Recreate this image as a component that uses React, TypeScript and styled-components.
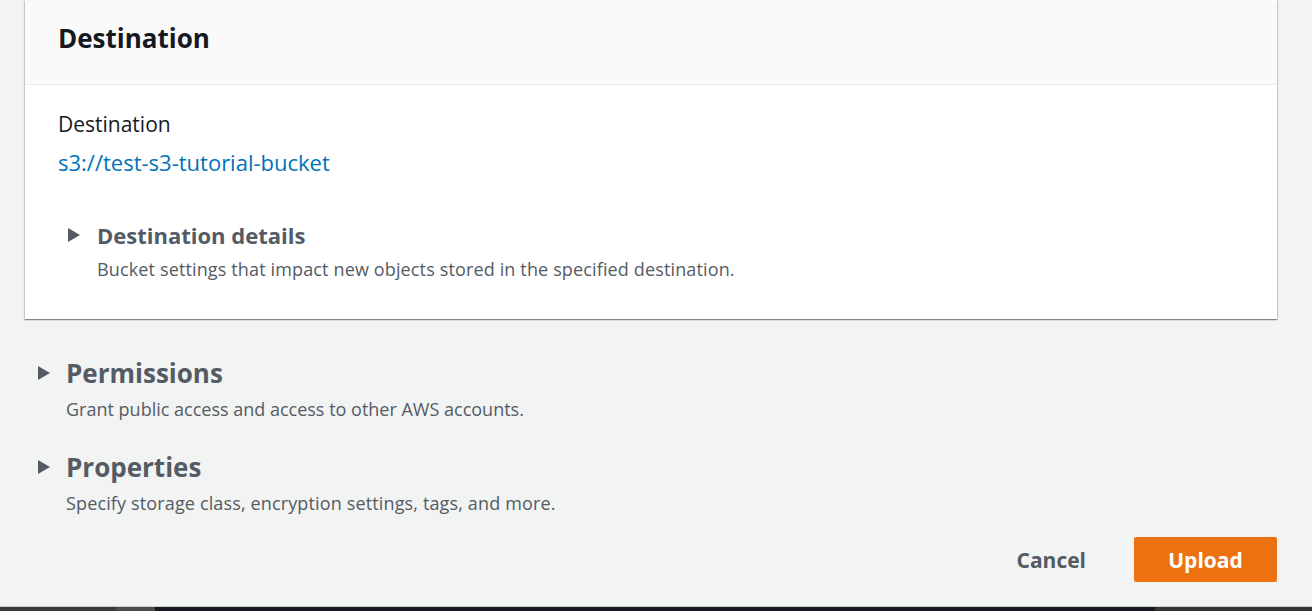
import React from 'react'
import styled, { createGlobalStyle } from 'styled-components'

const GlobalStyle = createGlobalStyle`
  html, body {
    margin: 0;
    padding: 0;
    background: #f2f3f3;
  }
  body {
    font-family: 'Open Sans', 'Noto Sans', sans-serif;
    color: #16191f;
  }
`

const Page = styled.div`
  width: 1312px;
  height: 611px;
  display: flex;
  flex-direction: column;
  overflow: hidden;
`

const Content = styled.div`
  flex: 1;
  display: flex;
  flex-direction: column;
  padding: 0 35px 0 25px;
`

const Card = styled.section`
  background: #fff;
  box-shadow: 0 1px 1px 0 rgba(0, 28, 36, 0.3), 1px 1px 1px 0 rgba(0, 28, 36, 0.15),
    -1px 1px 1px 0 rgba(0, 28, 36, 0.15);
`

const CardHeader = styled.header`
  height: 85px;
  display: flex;
  align-items: center;
  padding: 0 33px 8px;
  background: #fafafa;
  border-bottom: 1px solid #eaeded;
  box-sizing: border-box;
`

const CardTitle = styled.h2`
  margin: 0;
  font-size: 26px;
  font-weight: 700;
  color: #16191f;
`

const CardBody = styled.div`
  padding: 25px 33px 38px;
`

const Label = styled.div`
  font-size: 21px;
  line-height: 28px;
  color: #16191f;
`

const Link = styled.a`
  display: block;
  margin-top: 10px;
  font-size: 22px;
  line-height: 28px;
  color: #0073bb;
  text-decoration: none;
`

const Expander = styled.div<{ $indent: number }>`
  display: grid;
  grid-template-columns: ${p => p.$indent}px 1fr;
  row-gap: 8px;
  align-items: center;
`

const Caret = styled.span`
  width: 0;
  height: 0;
  border-top: 7px solid transparent;
  border-bottom: 7px solid transparent;
  border-left: 12px solid #545b64;
`

const ExpanderTitle = styled.div<{ $size: number }>`
  font-size: ${p => p.$size}px;
  font-weight: 700;
  color: #545b64;
  line-height: ${p => (p.$size > 24 ? 32 : 28)}px;
`

const ExpanderDesc = styled.div<{ $spacing?: number }>`
  grid-column: 2;
  font-size: 18px;
  line-height: 24px;
  letter-spacing: ${p => p.$spacing ?? 0}px;
  color: #545b64;
`

const DetailsBlock = styled.div`
  margin-top: 45px;
  padding-left: 10px;
`

const Sections = styled.div`
  display: flex;
  flex-direction: column;
  gap: 30px;
  padding: 38px 0 0 13px;
`

const Actions = styled.div`
  display: flex;
  justify-content: flex-end;
  align-items: center;
  gap: 48px;
  margin-top: 22px;
`

const TextButton = styled.button`
  border: 0;
  background: none;
  padding: 0;
  font-family: inherit;
  font-size: 21px;
  font-weight: 700;
  color: #545b64;
  cursor: pointer;
`

const PrimaryButton = styled.button`
  width: 143px;
  height: 45px;
  border: 0;
  border-radius: 2px;
  background: #ec7211;
  font-family: inherit;
  font-size: 21px;
  font-weight: 700;
  color: #fff;
  cursor: pointer;
`

const Taskbar = styled.div`
  height: 4px;
  display: flex;
  border-top: 1px solid #c9cccc;
`

const TaskSegment = styled.div<{ $w: string; $c: string }>`
  flex: ${p => p.$w};
  background: ${p => p.$c};
`

const sections = [
  { title: 'Permissions', desc: 'Grant public access and access to other AWS accounts.', spacing: 0 },
  { title: 'Properties', desc: 'Specify storage class, encryption settings, tags, and more.', spacing: 0.14 }
]

export default function App() {
  return (
    <Page>
      <GlobalStyle />
      <Content>
        <Card>
          <CardHeader>
            <CardTitle>Destination</CardTitle>
          </CardHeader>
          <CardBody>
            <Label>Destination</Label>
            <Link href='#'>s3://test-s3-tutorial-bucket</Link>
            <DetailsBlock>
              <Expander $indent={29}>
                <Caret />
                <ExpanderTitle $size={22}>Destination details</ExpanderTitle>
                <ExpanderDesc $spacing={0.14}>
                  Bucket settings that impact new objects stored in the specified destination.
                </ExpanderDesc>
              </Expander>
            </DetailsBlock>
          </CardBody>
        </Card>
        <Sections>
          {sections.map(s => (
            <Expander key={s.title} $indent={28}>
              <Caret />
              <ExpanderTitle $size={26}>{s.title}</ExpanderTitle>
              <ExpanderDesc $spacing={s.spacing}>{s.desc}</ExpanderDesc>
            </Expander>
          ))}
        </Sections>
        <Actions>
          <TextButton>Cancel</TextButton>
          <PrimaryButton>Upload</PrimaryButton>
        </Actions>
      </Content>
      <Taskbar>
        <TaskSegment $w='0 0 116px' $c='#3a3a3a' />
        <TaskSegment $w='0 0 39px' $c='#4a4a4a' />
        <TaskSegment $w='0 0 1000px' $c='#16191f' />
        <TaskSegment $w='1' $c='#333' />
      </Taskbar>
    </Page>
  )
}
